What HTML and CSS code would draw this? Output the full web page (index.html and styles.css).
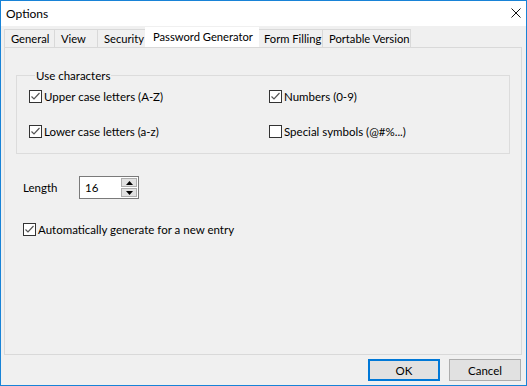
FILE: index.html
```html
<!DOCTYPE html>
<html lang="en">
<head>
  <meta charset="UTF-8">
  <title>Options</title>
  <link rel="stylesheet" href="styles.css">
</head>
<body>
  <div class="window">
    <div class="titlebar">
      <span class="title">Options</span>
      <svg class="close" width="10" height="10" viewBox="0 0 10 10"><path d="M0.5 0.5L9.5 9.5M9.5 0.5L0.5 9.5" stroke="#111" stroke-width="1"/></svg>
    </div>

    <div class="tabs">
      <div class="tab t-general">General</div>
      <div class="tab t-view">View</div>
      <div class="tab t-security">Security</div>
      <div class="tab t-password active">Password Generator</div>
      <div class="tab t-form">Form Filling</div>
      <div class="tab t-portable">Portable Version</div>
    </div>

    <div class="panel">
      <fieldset class="group">
        <legend>Use characters</legend>
        <div class="grid">
          <label class="check"><span class="box on"></span>Upper case letters (A-Z)</label>
          <label class="check"><span class="box on"></span>Numbers (0-9)</label>
          <label class="check"><span class="box on"></span>Lower case letters (a-z)</label>
          <label class="check"><span class="box"></span>Special symbols (@#%...)</label>
        </div>
      </fieldset>

      <div class="length">
        <span class="length-label">Length</span>
        <div class="spin">
          <span class="spin-value">16</span>
          <div class="spin-btns">
            <span class="spin-btn"><svg width="7" height="4" viewBox="0 0 7 4"><path d="M3.5 0L7 4H0z" fill="#000"/></svg></span>
            <span class="spin-btn"><svg width="7" height="4" viewBox="0 0 7 4"><path d="M0 0H7L3.5 4z" fill="#000"/></svg></span>
          </div>
        </div>
      </div>

      <label class="check auto"><span class="box on"></span>Automatically generate for a new entry</label>
    </div>

    <div class="footer">
      <button class="btn default">OK</button>
      <button class="btn">Cancel</button>
    </div>
  </div>
</body>
</html>
```

FILE: styles.css
```css
* {
  margin: 0;
  padding: 0;
  box-sizing: border-box;
}

body {
  font-family: Lato, 'Noto Sans', sans-serif;
  font-size: 11.5px;
  color: #000;
  background: #f0f0f0;
  white-space: nowrap;
}

.window {
  width: 527px;
  height: 386px;
  border: 1px solid #1883d7;
  background: #f0f0f0;
  display: flex;
  flex-direction: column;
}

.titlebar {
  height: 25px;
  background: #fff;
  display: flex;
  align-items: center;
  justify-content: space-between;
  padding: 0 5px 1px 5px;
}

.title {
  font-size: 12px;
}

/* Tabs */
.tabs {
  display: flex;
  align-items: flex-end;
  padding-left: 3px;
  margin-top: 2px;
  height: 19px;
  font-size: 11.2px;
}

.tab {
  flex: none;
  height: 18px;
  line-height: 17px;
  padding-left: 6px;
  border: 1px solid #d9d9d9;
  border-bottom: none;
  border-right: none;
  background: #f0f0f0;
}

.t-general { width: 50px; }
.t-view { width: 43px; }
.t-security { width: 48px; }
.t-form { width: 65px; }

.t-portable {
  width: 89px;
  border-right: 1px solid #d9d9d9;
}

.tab.active {
  width: 114px;
  height: 20px;
  line-height: 18px;
  padding-left: 7px;
  background: #fff;
  border-color: #fff;
  margin-right: -2px;
  position: relative;
  z-index: 1;
}

/* Panel */
.panel {
  margin: 0 4px 0 3px;
  height: 308px;
  border: 1px solid #d9d9d9;
  padding: 21px 11px 0 11px;
}

.group {
  border: 1px solid #dcdcdc;
  padding: 6px 12px 10px 12px;
  height: 85px;
}

.group legend {
  padding: 0 1px;
  margin-left: 6px;
}

.grid {
  display: grid;
  grid-template-columns: 240px 1fr;
  row-gap: 19px;
}

.check {
  display: flex;
  align-items: center;
  height: 16px;
}

.box {
  width: 13px;
  height: 13px;
  border: 1px solid #333;
  background: #fff;
  margin-right: 2px;
  flex: none;
}

.box.on {
  background: #fff url("data:image/svg+xml;utf8,<svg xmlns='http://www.w3.org/2000/svg' width='11' height='11' viewBox='0 0 11 11'><path d='M1.5 5.5L4 8L9.5 2' fill='none' stroke='%23555' stroke-width='1.2'/></svg>") center no-repeat;
}

/* Length spinner */
.length {
  display: flex;
  align-items: center;
  margin: 22px 0 0 7px;
}

.length-label {
  width: 56px;
}

.spin {
  width: 60px;
  height: 23px;
  border: 1px solid #7a7a7a;
  background: #fff;
  display: flex;
  align-items: center;
  justify-content: space-between;
  padding: 0 1px 0 5px;
}

.spin-btns {
  display: flex;
  flex-direction: column;
  gap: 1px;
}

.spin-btn {
  width: 16px;
  height: 9px;
  border: 1px solid #adadad;
  background: #e1e1e1;
  display: flex;
  align-items: center;
  justify-content: center;
}

.auto {
  margin: 22px 0 0 7px;
}

/* Footer */
.footer {
  display: flex;
  justify-content: flex-end;
  gap: 9px;
  padding: 4px 5px 0 0;
}

.btn {
  width: 72px;
  height: 22px;
  font-family: inherit;
  font-size: 11.5px;
  background: #e1e1e1;
  border: 1px solid #adadad;
}

.btn.default {
  border: 2px solid #0078d7;
}
```
